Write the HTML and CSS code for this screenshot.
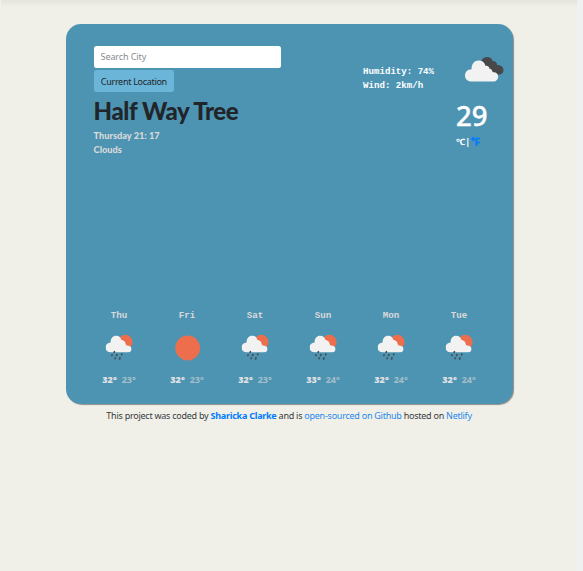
FILE: index.html
```html
<!DOCTYPE html>
<html lang="en">
<head>
<meta charset="utf-8">
<title>Weather</title>
<link rel="stylesheet" href="styles.css">
</head>
<body>
<svg class="defs" aria-hidden="true">
  <symbol id="cloud" viewBox="0 0 25 17"><path d="M5 17C2 17 0 15 0 12.3C0 9.7 2 7.7 4.8 7.5C4.8 3.3 7 1 10.2 1C13 1 14.7 2.6 15.2 5C16 4.7 16.9 5 17.5 6C18.3 6.1 19.2 7.3 19.3 9C19.8 9.2 20 9.8 20 10.2C22.8 9.9 25 11.3 25 13.6C25 15.6 23.4 17 21.3 17Z"/></symbol>
  <symbol id="rain" viewBox="0 0 28 28">
    <circle cx="20.4" cy="8" r="7.2" fill="#ec6e4c"/>
    <use href="#cloud" x="0.6" y="0.8" width="26" height="17.7"/>
    <path class="drops" d="M9.6 17l-.7 1.9M7.4 20.2l-.9 1.9M12.3 20l-1 2.1M17.2 19.5l-.9 1.9M10.6 23.4l-.9 1.8M15.3 23.2l-1 2.4"/>
  </symbol>
</svg>
<main class="card">
  <header class="top">
    <section class="place">
      <input class="search" type="text" placeholder="Search City">
      <button class="locate">Current Location</button>
      <h1>Half Way Tree</h1>
      <p class="meta">Thursday 21: 17<br>Clouds</p>
    </section>
    <p class="stats">Humidity: 74%<br>Wind: 2km/h</p>
    <section class="now">
      <svg class="now-icon" viewBox="0 0 40 26">
        <path fill="#48484a" d="M17 6C18 2.5 20 1 23 1C26 1 28 2.6 28.5 5C31 4.8 33 6.3 33.2 9C36.8 8.8 39.5 11 39.5 14C39.5 17 37 19 34 18.6L23 13Z"/>
        <path fill="#f2f2f2" d="M7.5 25.5C3.5 25.5 1 23 1 19.5C1 16 3.7 13.2 7.5 13.2C7.6 7.8 10.4 4.6 14.8 4.6C18.5 4.6 20.7 6.8 21.5 10C23.7 9.4 25.4 11 25.5 12.8C27.5 12.9 28.5 14.7 28.5 16.3C31.8 15.7 34.2 17.8 34.2 20.5C34.2 23.4 32.2 25.5 29.3 25.5Z"/>
      </svg>
      <div class="temp">29</div>
      <div class="units">℃|<a>℉</a></div>
    </section>
  </header>
  <section class="forecast">
    <article><h2>Thu</h2><svg class="day-icon"><use href="#rain"/></svg><p><b>32°</b><span>23°</span></p></article>
    <article><h2>Fri</h2><svg class="day-icon" viewBox="0 0 28 28"><circle cx="14.7" cy="14" r="12.4" fill="#ec6e4c"/></svg><p><b>32°</b><span>23°</span></p></article>
    <article><h2>Sat</h2><svg class="day-icon"><use href="#rain"/></svg><p><b>32°</b><span>23°</span></p></article>
    <article><h2>Sun</h2><svg class="day-icon"><use href="#rain"/></svg><p><b>33°</b><span>24°</span></p></article>
    <article><h2>Mon</h2><svg class="day-icon"><use href="#rain"/></svg><p><b>32°</b><span>24°</span></p></article>
    <article><h2>Tue</h2><svg class="day-icon"><use href="#rain"/></svg><p><b>32°</b><span>24°</span></p></article>
  </section>
</main>
<footer>This project was coded by <a class="author">Sharicka Clarke</a> and is <a>open-sourced on Github</a> hosted on <a>Netlify</a></footer>
</body>
</html>
```
FILE: styles.css
```css
* { box-sizing: border-box; }
html { background: #eff1f0; }
body {
  margin: 0 6px 0 1px;
  height: 571px;
  padding-top: 23.6px;
  background: linear-gradient(#e5e5dd, #f0f0e8 7px);
  font-family: "Noto Sans", sans-serif;
  overflow: hidden;
}
h1, h2, p { margin: 0; }
.defs { position: absolute; width: 0; height: 0; }
.card {
  width: 447px;
  height: 380px;
  margin-left: 64.6px;
  padding: 22px 0 0 19px;
  border-radius: 15px;
  background: #4d94b3;
  box-shadow: 1px 1px 1px #8d8d8d;
}
.top { display: flex; height: 262px; padding-left: 9px; }
.place { width: 269.5px; }
.search, .locate {
  display: block;
  height: 22px;
  padding: 0 7px;
  border: 0;
  border-radius: 2.5px;
  font: 9px/21px "Noto Sans", sans-serif;
}
.search { width: 187px; background: #fff; letter-spacing: -.1px; }
.search::placeholder { color: #858b90; opacity: 1; }
.locate { width: 80.5px; margin-top: 2.6px; padding: 0; background: #6bb5d8; color: #212529; letter-spacing: -.3px; }
h1 { margin-top: 4px; font: 900 24px/30px Lato, sans-serif; color: #212529; letter-spacing: -.42px; white-space: nowrap; }
.meta { margin-top: 3px; font: 900 9.2px/13.5px Lato, sans-serif; color: #d9d9d9; }
.stats {
  width: 93px;
  padding-top: 19.4px;
  font: 700 9.1px/14px "Liberation Mono", monospace;
  color: #fff;
  white-space: nowrap;
}
.now { padding-top: 10px; color: #fff; }
.now-icon { display: block; width: 40px; height: 26px; margin-left: 8px; }
.temp { height: 38px; margin-top: 15px; font: 500 27.5px/38px "Noto Sans", sans-serif; -webkit-text-stroke: .4px #fff; }
.units { margin-top: 0; font: 700 9px/13px "Noto Sans", sans-serif; white-space: nowrap; }
.units a { margin-left: 1px; font: 700 9px/13px "Noto Sans CJK SC", sans-serif; -webkit-text-stroke: .5px #007bff; }
a { color: #007bff; }
.forecast { display: grid; grid-template-columns: repeat(6, 68px); text-align: center; }
h2 { padding-left: 1px; font: 700 9.2px/15px "Liberation Mono", monospace; color: #d9d9d9; }
.day-icon { display: block; width: 28px; height: 28px; margin: 11px auto 0; fill: #f2f2f2; }
.drops { stroke: #46484a; stroke-width: 1.5; fill: none; }
.forecast p { margin-top: 11px; padding-left: 1px; font: 700 9px/14px "Noto Sans", sans-serif; color: #a5c0cb; }
.forecast b { margin-right: 5px; color: #e2e2e2; }
footer { width: 447px; margin: 4px 0 0 64.6px; font-size: 9px; line-height: 15px; color: #363b40; text-align: center; white-space: nowrap; letter-spacing: -.25px; }
footer a { color: #2588ed; }
footer .author { color: #007bff; font-weight: 700; }
```
